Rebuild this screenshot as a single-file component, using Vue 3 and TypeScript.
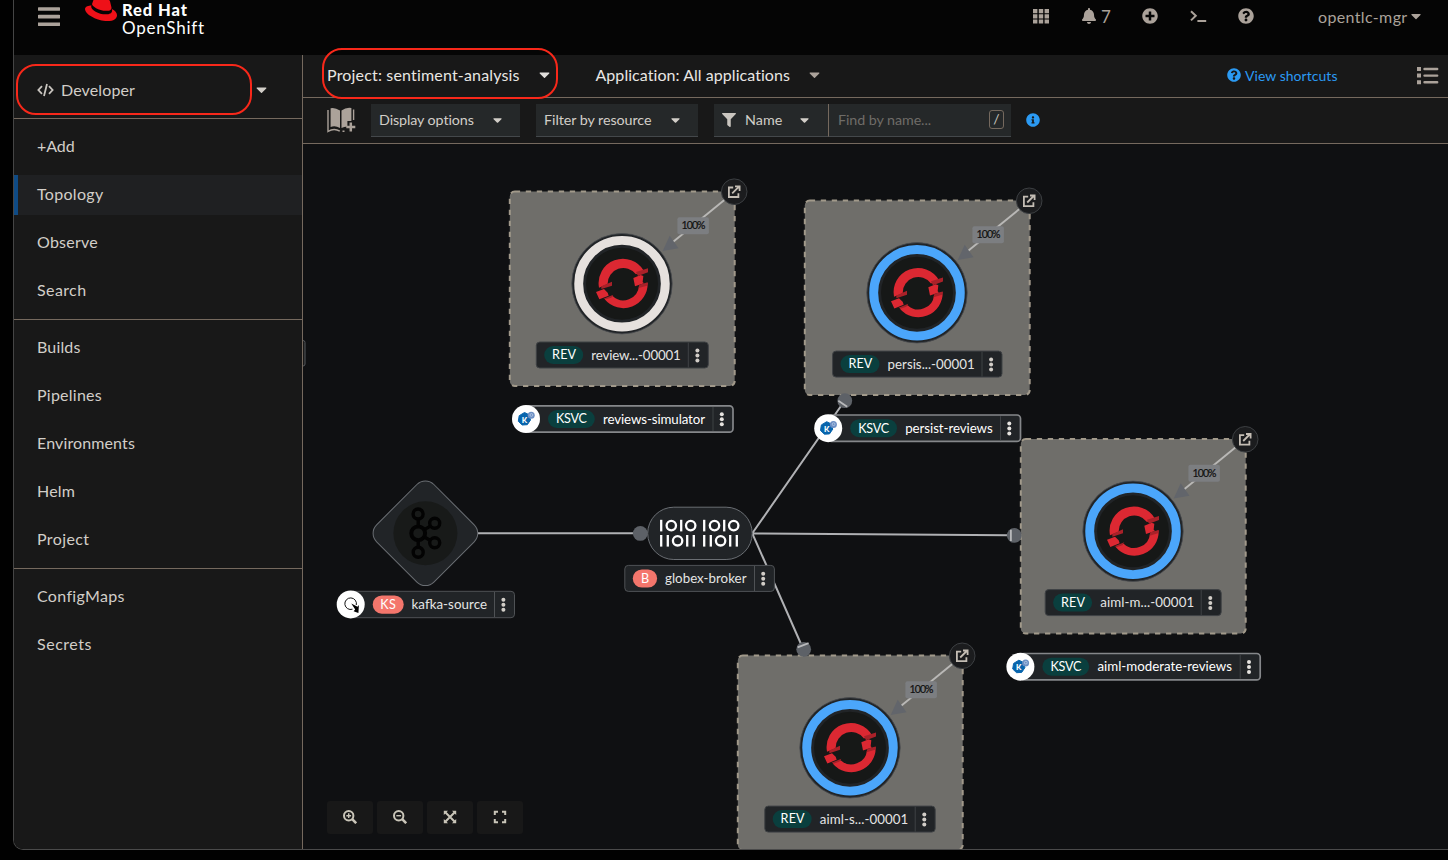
<script setup lang="ts">
import type { Directive } from 'vue'

// Spreads the letters of a label so that it fills the given width in pixels.
const vFit: Directive<HTMLElement, number> = {
  mounted(el, binding) {
    const natural = el.getBoundingClientRect().width
    const count = (el.textContent ?? '').trim().length
    if (count > 0) el.style.letterSpacing = `${(binding.value - natural) / count}px`
  },
}

interface NavItem { label: string; width: number; active?: boolean }
const sections: NavItem[][] = [
  [
    { label: '+Add', width: 37.5 },
    { label: 'Topology', width: 66.5, active: true },
    { label: 'Observe', width: 61 },
    { label: 'Search', width: 49.5 },
  ],
  [
    { label: 'Builds', width: 43.5 },
    { label: 'Pipelines', width: 65 },
    { label: 'Environments', width: 98 },
    { label: 'Helm', width: 38 },
    { label: 'Project', width: 52.5 },
  ],
  [
    { label: 'ConfigMaps', width: 87.5 },
    { label: 'Secrets', width: 55 },
  ],
]

interface Revision { x: number; y: number; ring: string; name: string; nameWidth: number; left: number; right: number }
const revisions: Revision[] = [
  { x: 622, y: 283.7, ring: '#e6e1de', name: 'review...-00001', nameWidth: 89.5, left: 536.3, right: 708.3 },
  { x: 917, y: 292.8, ring: '#4ba6fb', name: 'persis...-00001', nameWidth: 87, left: 832.6, right: 1002 },
  { x: 1133, y: 531.3, ring: '#4ba6fb', name: 'aiml-m...-00001', nameWidth: 94, left: 1045.2, right: 1221.2 },
  { x: 850, y: 747.8, ring: '#4ba6fb', name: 'aiml-s...-00001', nameWidth: 88.5, left: 764.8, right: 935.2 },
]

interface Service { x: number; y: number; right: number; name: string; nameWidth: number }
const services: Service[] = [
  { x: 526, y: 419, right: 733, name: 'reviews-simulator', nameWidth: 102 },
  { x: 828.2, y: 428.2, right: 1020.5, name: 'persist-reviews', nameWidth: 87.5 },
  { x: 1020.4, y: 666.7, right: 1260.2, name: 'aiml-moderate-reviews', nameWidth: 134.5 },
]

const bits = [
  { ones: [661.2, 681.2, 704.2, 724.2], zeros: [671.3, 690.7, 714.5, 733.7], y: 525.6 },
  { ones: [661.2, 667.8, 687.2, 693.8, 704.2, 710.8, 730.2, 736.8], zeros: [677.6, 720.6], y: 540.8 },
]

const caret = 'M31.3 192h257.3c17.8 0 26.7 21.5 14.1 34.1L174.1 354.8c-7.8 7.8-20.5 7.8-28.3 0L17.2 226.1C4.6 213.5 13.5 192 31.3 192z'
const question = 'M504 256c0 136.997-111.043 248-248 248S8 392.997 8 256C8 119.083 119.043 8 256 8s248 111.083 248 248zM262.655 90c-54.497 0-89.255 22.957-116.549 63.758-3.536 5.286-2.353 12.415 2.715 16.258l34.699 26.31c5.205 3.947 12.621 3.008 16.665-2.122 17.864-22.658 30.113-35.797 57.303-35.797 20.429 0 45.698 13.148 45.698 32.958 0 14.976-12.363 22.667-32.534 33.976C247.128 238.528 216 254.941 216 296v4c0 6.627 5.373 12 12 12h56c6.627 0 12-5.373 12-12v-1.333c0-28.462 83.186-29.647 83.186-106.667 0-58.002-60.165-102-116.531-102zM256 338c-25.365 0-46 20.635-46 46 0 25.364 20.635 46 46 46s46-20.636 46-46c0-25.365-20.635-46-46-46z'
</script>

<template>
  <div class="desktop">
    <div class="window">
      <header class="masthead">
        <svg class="burger" width="22" height="19" viewBox="0 0 22 19"><path d="M1 2h20M1 9.6h20M1 17.2h20" stroke="#aba29a" stroke-width="3.6" stroke-linecap="round" /></svg>
        <svg class="hat" width="32" height="28" viewBox="0 0 24 21">
          <path fill="#ee1018" d="M16.009 13.386c1.577 0 3.86-.326 3.86-2.202a1.765 1.765 0 0 0-.04-.431l-.94-4.08c-.216-.898-.406-1.305-1.982-2.093-1.223-.625-3.888-1.658-4.676-1.658-.733 0-.947.946-1.822.946-.842 0-1.467-.706-2.255-.706-.757 0-1.25.515-1.63 1.576 0 0-1.06 2.99-1.197 3.424a.81.81 0 0 0-.028.245c0 1.162 4.577 4.974 10.71 4.974m4.101-1.435c.218 1.032.218 1.14.218 1.277 0 1.765-1.984 2.745-4.593 2.745-5.895.004-11.06-3.451-11.06-5.734a2.326 2.326 0 0 1 .19-.925C2.746 9.415 0 9.794 0 12.217c0 3.969 9.405 8.861 16.851 8.861 5.71 0 7.149-2.582 7.149-4.62 0-1.605-1.387-3.425-3.887-4.512" />
        </svg>
        <div class="brand">
          <span><b v-fit="66">Red Hat</b></span>
          <span><i v-fit="82.5">OpenShift</i></span>
        </div>
        <nav class="tools">
          <svg class="t-grid" width="16" height="15" viewBox="0 0 16 15"><path d="M0 0h4.4v4.2H0zM5.8 0h4.4v4.2H5.8zM11.6 0H16v4.2h-4.4zM0 5.2h4.4v4.2H0zM5.8 5.2h4.4v4.2H5.8zM11.6 5.2H16v4.2h-4.4zM0 10.4h4.4v4.2H0zM5.8 10.4h4.4v4.2H5.8zM11.6 10.4H16v4.2h-4.4z" fill="#aba29a" /></svg>
          <svg class="t-bell" width="14" height="16" viewBox="0 0 448 512"><path fill="#aba29a" d="M224 512c35.32 0 63.97-28.65 63.97-64H160.03c0 35.35 28.65 64 63.97 64zm215.39-149.71c-19.32-20.76-55.47-51.99-55.47-154.29 0-77.7-54.48-139.9-127.94-155.16V32c0-17.67-14.32-32-31.98-32s-31.98 14.33-31.98 32v20.84C118.56 68.1 64.08 130.3 64.08 208c0 102.3-36.15 133.53-55.47 154.29-6 6.45-8.66 14.16-8.61 21.71.11 16.4 12.98 32 32.1 32h383.8c19.12 0 32-15.6 32.1-32 .05-7.55-2.61-15.27-8.61-21.71z" /></svg>
          <span class="t-count">7</span>
          <svg class="t-plus" width="16" height="16" viewBox="0 0 512 512"><path fill="#aba29a" d="M256 8C119 8 8 119 8 256s111 248 248 248 248-111 248-248S393 8 256 8zm144 276c0 6.6-5.4 12-12 12h-92v92c0 6.6-5.4 12-12 12h-56c-6.6 0-12-5.4-12-12v-92h-92c-6.6 0-12-5.4-12-12v-56c0-6.6 5.4-12 12-12h92v-92c0-6.6 5.4-12 12-12h56c6.6 0 12 5.4 12 12v92h92c6.6 0 12 5.4 12 12v56z" /></svg>
          <svg class="t-term" width="17" height="13" viewBox="0 0 17 13"><path d="M1 1.2l4.8 4.6L1 10.4M7.4 11h8.8" fill="none" stroke="#aba29a" stroke-width="2" /></svg>
          <svg class="t-help" width="16" height="16" viewBox="0 0 512 512"><path fill="#aba29a" :d="question" /></svg>
          <span class="t-user"><span v-fit="89.5">opentlc-mgr</span></span>
          <svg class="t-caret" width="10" height="16" viewBox="0 0 320 512"><path fill="#aba29a" :d="caret" /></svg>
        </nav>
      </header>

      <div class="body">
        <aside class="sidebar">
          <div class="perspective">
            <svg width="17" height="14" viewBox="0 0 17 14"><path d="M5 3.2L1.4 7 5 10.8M12 3.2L15.6 7 12 10.8M10 1L7 13" fill="none" stroke="#c9c5bf" stroke-width="1.8" /></svg>
            <span class="p-name"><span v-fit="74">Developer</span></span>
            <svg class="p-caret" width="11" height="17" viewBox="0 0 320 512"><path fill="#d2cec8" :d="caret" /></svg>
          </div>
          <ul v-for="(section, i) in sections" :key="i" class="section">
            <li v-for="item in section" :key="item.label" :class="{ active: item.active }">
              <span v-fit="item.width">{{ item.label }}</span>
            </li>
          </ul>
        </aside>

        <main class="main">
          <div class="context">
            <span class="c-project"><span v-fit="193">Project: sentiment-analysis</span></span>
            <svg class="c-caret" width="11" height="17" viewBox="0 0 320 512"><path fill="#e0dedb" :d="caret" /></svg>
            <span class="c-app"><span v-fit="195">Application: All applications</span></span>
            <svg class="c-caret2" width="11" height="17" viewBox="0 0 320 512"><path fill="#aba29a" :d="caret" /></svg>
            <a class="shortcuts">
              <svg width="14" height="14" viewBox="0 0 512 512"><path fill="#2b9af3" :d="question" /></svg>
              <span v-fit="92.5">View shortcuts</span>
            </a>
            <svg class="list" width="22" height="18" viewBox="0 0 22 18"><path d="M0 0h4v4H0zM0 6.6h4v4H0zM0 13.2h4v4H0z" fill="#aba29a" /><path d="M7.5 2h12.7M7.5 8.6h12.7M7.5 15.2h12.7" stroke="#aba29a" stroke-width="2.4" stroke-linecap="round" /></svg>
          </div>

          <div class="filters">
            <svg class="book" width="29" height="27" viewBox="0 0 29 27">
              <path d="M3.6 1.2Q8 .2 13 3.5V21Q8 18 3.6 20zM14.5 3.5Q19 .2 24.4 1V14h-4v5.4Q17 19.5 14.5 21z" fill="#aba29a" />
              <path d="M1 3v21.5Q7 20.5 12.8 24.2M15.5 24.3h2M26.6 2.6V13" fill="none" stroke="#aba29a" stroke-width="1.4" />
              <path d="M23.8 15.5v9M19.3 20h9" stroke="#aba29a" stroke-width="2.5" />
            </svg>
            <div class="select display"><span v-fit="95">Display options</span><svg width="9" height="14" viewBox="0 0 320 512"><path fill="#d2cec8" :d="caret" /></svg></div>
            <div class="select resource"><span v-fit="107.5">Filter by resource</span><svg width="9" height="14" viewBox="0 0 320 512"><path fill="#d2cec8" :d="caret" /></svg></div>
            <div class="select name">
              <svg width="14" height="14" viewBox="0 0 512 512"><path fill="#c9c5bf" d="M487.976 0H24.028C2.71 0-8.047 25.866 7.058 40.971L192 225.941V432c0 7.831 3.821 15.17 10.237 19.662l80 55.98C298.02 518.69 320 507.493 320 487.98V225.941l184.947-184.97C520.021 25.896 509.338 0 487.976 0z" /></svg>
              <span class="n-label"><span v-fit="37.5">Name</span></span>
              <svg class="n-caret" width="9" height="14" viewBox="0 0 320 512"><path fill="#d2cec8" :d="caret" /></svg>
            </div>
            <div class="find"><span v-fit="93">Find by name...</span><kbd>/</kbd></div>
            <svg class="info" width="14" height="14" viewBox="0 0 512 512"><path fill="#2b9af3" d="M256 8C119.043 8 8 119.083 8 256c0 136.997 111.043 248 248 248s248-111.003 248-248C504 119.083 392.957 8 256 8zm0 110c23.196 0 42 18.804 42 42s-18.804 42-42 42-42-18.804-42-42 18.804-42 42-42zm56 254c0 6.627-5.373 12-12 12h-88c-6.627 0-12-5.373-12-12v-24c0-6.627 5.373-12 12-12h12v-64h-12c-6.627 0-12-5.373-12-12v-24c0-6.627 5.373-12 12-12h64c6.627 0 12 5.373 12 12v100h12c6.627 0 12 5.373 12 12v24z" /></svg>
          </div>

          <section class="canvas">
            <svg class="graph" width="1145" height="705" viewBox="303 144 1145 705">
              <path d="M303 340.5q2 0 2 2v21.5q0 2-2 2" fill="#181818" stroke="#55585c" />

              <!-- revision groups -->
              <rect v-for="r in revisions" :key="'g' + r.name" :x="r.x - 112.2" :y="r.y - 92.2" width="224.9" height="194.4" rx="5" fill="#6f6e6a" stroke="#a1998a" stroke-width="2" stroke-dasharray="5.3 5.7" />

              <!-- connectors -->
              <g stroke="#b0b1b4" stroke-width="2" fill="none">
                <path d="M478 533.3H636M752.3 533.3L841 406M752.3 533.3L1008 535.3M752.3 533.3L801 644" />
              </g>
              <g fill="#5d6167">
                <circle cx="640.3" cy="533.4" r="7.4" />
                <circle cx="844.8" cy="400.7" r="7.4" />
                <circle cx="1014.3" cy="535.4" r="7.4" />
                <circle cx="803.7" cy="649.3" r="7.4" />
              </g>
              <path d="M838.3 400.8L847.2 406.8M1010.9 529.8V541M797.6 647.3L808.6 643.2" stroke="#b8b9bb" stroke-width="1.8" />

              <!-- revision nodes -->
              <g v-for="r in revisions" :key="r.name">
                <g :transform="`translate(${r.x} ${r.y})`">
                  <path d="M110 -90L50 -41" stroke="#b9b8b6" stroke-width="1.9" />
                  <path d="M40.7 -32.7L47.7 -48L56.5 -35.5Z" fill="#62656b" />
                  <rect x="55.4" y="-66.5" width="31.5" height="17" rx="2" fill="#7c7e81" />
                  <text x="59.5" y="-54.6" font-size="10.5" textLength="24" fill="#101010" stroke="#101010" stroke-width=".2">100%</text>
                  <circle cx="112.2" cy="-92" r="12.8" fill="#1b1c1e" stroke="#3c3f42" />
                  <path d="M111.2 -96.2H106.9V-86.7H116.4V-90.5M110.2 -90.3L117.2 -97.3M113 -97.3H117.6V-92.7" fill="none" stroke="#c4bdb4" stroke-width="1.8" />
                  <circle r="50.2" fill="#212427" stroke="#4a4d50" stroke-width=".8" />
                  <circle r="43.3" fill="#212427" :stroke="r.ring" stroke-width="8.9" />
                  <circle r="36" fill="#161817" />
                  <g transform="scale(.3333) translate(-366 -341)">
                    <path fill="#dc2832" d="M297 353A73 73 0 0 1 432 303L408 313A47 47 0 0 0 323 342ZM443 338A73 73 0 0 1 314 388L338 378A47 47 0 0 0 417 348ZM400 324L422 315L430 318L428 336L432 340L405 349ZM288 366L312 357L323 368L326 377L298 388Z" />
                    <path fill="#a92129" d="M408 306L444 295V307L414 318ZM304 349L336 335V347L304 357ZM418 344L443 337L441 347L416 354ZM310 386L340 374L334 383L318 388Z" />
                  </g>
                </g>
                <rect :x="r.left" :y="r.y + 58.3" :width="r.right - r.left" height="26" rx="3.5" fill="#212427" stroke="#3f4245" />
                <rect :x="r.left + 7.9" :y="r.y + 62.3" width="39" height="18" rx="9" fill="#0a3f3e" />
                <text :x="r.left + 15.8" :y="r.y + 75.3" font-size="12.6" textLength="24" fill="#fff">REV</text>
                <text :x="r.left + 55" :y="r.y + 76" font-size="13.3" :textLength="r.nameWidth" fill="#e4e4e4">{{ r.name }}</text>
                <path :d="`M${r.right - 20} ${r.y + 58.8}v25`" stroke="#3f4245" />
                <g fill="#d2cec8"><circle v-for="k in [-5, 0, 5]" :key="k" :cx="r.right - 10.9" :cy="r.y + 71.7 + k" r="2" /></g>
              </g>

              <!-- knative service labels -->
              <g v-for="s in services" :key="s.name">
                <rect :x="s.x" :y="s.y - 13.2" :width="s.right - s.x" height="26.4" rx="3.5" fill="#212427" stroke="#85878a" stroke-width="1.7" />
                <circle :cx="s.x" :cy="s.y" r="14" fill="#fff" />
                <g :transform="`translate(${s.x} ${s.y})`">
                  <path d="M-1.5 -6.5L3 -4.3L4.5 1L1.3 5.7L-3.8 6L-7.7 2.3L-6.8 -3.3Z" fill="#0865ad" stroke="#0865ad" stroke-linejoin="round" />
                  <circle cx="5.2" cy="-3.8" r="3.5" fill="#6d8fc4" /><circle cx="5.4" cy="-4" r="1.4" fill="none" stroke="#b9cbe6" stroke-width=".8" />
                  <text x="-4.3" y="3.5" font-size="7.8" font-weight="900" fill="#fff">K</text>
                </g>
                <rect :x="s.x + 22" :y="s.y - 9" width="46.8" height="18" rx="9" fill="#0a3f3e" />
                <text :x="s.x + 30" :y="s.y + 4.4" font-size="12.6" textLength="31" fill="#fff">KSVC</text>
                <text :x="s.x + 77" :y="s.y + 4.7" font-size="13.3" :textLength="s.nameWidth" fill="#fff">{{ s.name }}</text>
                <path :d="`M${s.right - 20} ${s.y - 12}v24`" stroke="#3f4245" />
                <g fill="#e6e3df"><circle v-for="k in [-5, 0, 5]" :key="k" :cx="s.right - 11.2" :cy="s.y + .3 + k" r="2" /></g>
              </g>

              <!-- kafka source -->
              <g transform="translate(425.4 533.3)">
                <rect x="-40.5" y="-40.5" width="81" height="81" rx="12" transform="rotate(45)" fill="#212427" stroke="#6a6e73" />
                <circle r="32" fill="#181a19" />
                <g fill="none" stroke="#030303" stroke-width="3.4">
                  <circle cx="-7.3" cy="-19.3" r="5" /><circle cx="-7.2" cy="19" r="5" />
                  <circle cx="9.3" cy="-10" r="5" /><circle cx="9.3" cy="9.5" r="5" />
                  <circle cx="-7.2" cy="0" r="6.9" stroke-width="4" />
                  <path d="M-7.2 -14V-7M-7.2 7V14M-1 -3.7L5 -7.2M-1 3.7L5 7.2" />
                </g>
              </g>
              <g>
                <rect x="350" y="591.3" width="164.5" height="26.4" rx="3.5" fill="#212427" stroke="#4f5255" />
                <circle cx="350.7" cy="604.4" r="14" fill="#fff" />
                <path d="M352.5 609.2A5.8 5.8 0 1 1 356.3 605" fill="none" stroke="#111" />
                <path d="M351.3 603.5L357.5 606.8L358.9 604.9L358.4 613L353.6 611.2L355.2 609.5Z" fill="#000" />
                <rect x="372.7" y="595.4" width="31" height="18.3" rx="9.15" fill="#f4766c" />
                <text x="380.3" y="608.9" font-size="12.6" textLength="15.5" fill="#fff">KS</text>
                <text x="411.5" y="609.2" font-size="13.3" textLength="75.5" fill="#e4e4e4">kafka-source</text>
                <path d="M494.5 592v25" stroke="#4f5255" />
                <g fill="#d2cec8"><circle v-for="k in [-5, 0, 5]" :key="k" cx="503.4" :cy="604.7 + k" r="2" /></g>
              </g>

              <!-- broker -->
              <rect x="647.7" y="507.2" width="104.5" height="52.3" rx="26.1" fill="#212427" stroke="#6a6e73" />
              <g v-for="(row, i) in bits" :key="i" stroke="#fff" stroke-width="2.3" fill="none">
                <path v-for="x in row.ones" :key="x" :d="`M${x} ${row.y - 5.8}v11.6`" />
                <circle v-for="x in row.zeros" :key="x" :cx="x" :cy="row.y" r="4.7" />
              </g>
              <g>
                <rect x="624.8" y="565.4" width="149.6" height="26" rx="3.5" fill="#212427" stroke="#4f5255" />
                <rect x="632.8" y="569.4" width="24.3" height="18.2" rx="9.1" fill="#f4766c" />
                <text x="641" y="583" font-size="12.6" textLength="8" fill="#fff">B</text>
                <text x="665" y="583.2" font-size="13.3" textLength="81.5" fill="#e4e4e4">globex-broker</text>
                <path d="M754.5 566v25" stroke="#4f5255" />
                <g fill="#d2cec8"><circle v-for="k in [-5, 0, 5]" :key="k" cx="763.2" :cy="578.7 + k" r="2" /></g>
              </g>
            </svg>

            <div class="zoombar">
              <button><svg width="14" height="14" viewBox="0 0 14 14"><circle cx="5.7" cy="5.7" r="4.7" /><path d="M9.2 9.2l4 4" stroke-width="2.6" /><path d="M3.3 5.7h4.8M5.7 3.3v4.8" stroke-width="1.4" /></svg></button>
              <button><svg width="14" height="14" viewBox="0 0 14 14"><circle cx="5.7" cy="5.7" r="4.7" /><path d="M9.2 9.2l4 4" stroke-width="2.6" /><path d="M3.3 5.7h4.8" stroke-width="1.4" /></svg></button>
              <button><svg width="14" height="14" viewBox="0 0 14 14"><path d="M2 2l10 10M12 2L2 12" /><path d="M.8 5V.8H5zM9 .8h4.2V5zM13.2 9v4.2H9zM5 13.2H.8V9z" class="solid" /></svg></button>
              <button><svg width="14" height="14" viewBox="0 0 14 14"><path d="M1.8 5V1.8H5M9 1.8h3.2V5M12.2 9v3.2H9M5 12.2H1.8V9" /></svg></button>
            </div>
          </section>
        </main>
      </div>
    </div>
    <div class="mark mark-perspective"></div>
    <div class="mark mark-project"></div>
  </div>
</template>

<style>
html, body { margin: 0; background: #010101; overflow: hidden; }
</style>

<style scoped>
.desktop {
  position: relative;
  box-sizing: border-box;
  width: 1448px;
  height: 860px;
  padding-left: 13px;
  background: #010101;
  font-family: Lato, "Noto Sans", sans-serif;
  font-size: 16px;
  color: #d2cec8;
  overflow: hidden;
  white-space: nowrap;
}
svg { display: block; flex: none; }
.window {
  box-sizing: border-box;
  height: 850px;
  display: flex;
  flex-direction: column;
  border-left: 1px solid #454545;
  border-bottom: 1px solid #4a4a4a;
  border-bottom-left-radius: 10px;
  overflow: hidden;
}
.masthead { height: 55px; flex: none; display: flex; align-items: flex-start; background: #050505; overflow: hidden; }
.burger { margin: 7px 0 0 24px; }
.hat { margin: -7px 0 0 25px; }
.brand { padding-top: .5px; margin-left: 5px; width: 100px; display: flex; flex-direction: column; color: #fff; font-size: 17px; line-height: 18.5px; }
.brand b { font-weight: 900; font-size: 16.5px; }
.brand i { font-style: normal; }
.tools { margin-left: auto; width: 415px; height: 32px; display: flex; align-items: center; color: #aba29a; }
.t-bell { margin-left: 33px; }
.t-count { margin-left: 5px; width: 9px; font-size: 17px; }
.t-plus { margin-left: 32px; }
.t-term { margin-left: 32px; }
.t-help { margin-left: 31px; }
.t-user { margin-left: 64px; width: 89px; }
.t-caret { margin-left: 4px; }

.body { flex: 1; min-height: 0; display: flex; }
.sidebar { width: 288px; flex: none; background: #181818; border-right: 1px solid #75695e; }
.perspective { box-sizing: border-box; height: 64px; display: flex; align-items: center; padding: 8px 0 2px 23px; border-bottom: 1px solid #75695e; }
.p-name { margin-left: 7px; width: 195px; }
.section { list-style: none; margin: 0; padding: 8px 0; display: flex; flex-direction: column; gap: 8px; }
.section:not(:last-child) { border-bottom: 1px solid #75695e; }
.section li { height: 40px; box-sizing: border-box; padding: 0 0 3px 23px; display: flex; align-items: center; }
.section li.active { background: #1f2022; border-left: 4px solid #0f4b85; padding-left: 19px; }

.main { flex: 1; min-width: 0; display: flex; flex-direction: column; background: #0f1012; }
.context { height: 43px; flex: none; box-sizing: border-box; padding-bottom: 3px; border-bottom: 1px solid #75695e; background: #181818; display: flex; align-items: center; color: #e8e6e3; }
.c-project { margin-left: 24px; width: 193px; }
.c-caret { margin-left: 18.5px; }
.c-app { margin-left: 46px; width: 195px; }
.c-caret2 { margin-left: 18px; }
.shortcuts { margin: 1px 0 0 407.5px; width: 140px; display: flex; align-items: center; gap: 4px; color: #2b9af3; font-size: 14px; }
.list { margin: 2px 0 0 50px; }
.filters { height: 46px; flex: none; box-sizing: border-box; border-bottom: 1px solid #75695e; background: #181818; display: flex; align-items: center; font-size: 14.3px; }
.filters span { padding-bottom: 1px; }
.book { margin-left: 24px; }
.select { box-sizing: border-box; height: 33px; display: flex; align-items: center; justify-content: space-between; background: #252829; border-bottom: 1px solid #44484b; padding: 0 18px 1px 8px; }
.display { width: 149px; margin-left: 15px; }
.resource { width: 162px; margin-left: 16px; }
.name { width: 114px; margin-left: 16px; justify-content: flex-start; padding-right: 0; }
.n-label { margin-left: 9px; width: 38px; }
.n-caret { margin-left: 17px; }
.find { box-sizing: border-box; width: 183px; height: 33px; display: flex; align-items: center; justify-content: space-between; background: #252829; border-left: 1px solid #75695e; border-bottom: 1px solid #44484b; padding: 0 7px 1px 9px; color: #6f6c68; }
kbd { box-sizing: border-box; width: 15px; height: 19px; border: 1px solid #75695e; border-radius: 3px; font: 14px/16px Lato, sans-serif; text-align: center; color: #c9c5bf; }
.info { margin: 0 0 1px 15px; }

.canvas { flex: 1; min-height: 0; position: relative; overflow: hidden; }
.graph text { font-family: Lato, "Noto Sans", sans-serif; }
.zoombar { position: absolute; left: 24px; bottom: 15px; display: flex; gap: 4px; }
.zoombar button { width: 46px; height: 33px; padding: 0 0 1px; border: 0; border-radius: 3px; background: #181818; display: flex; align-items: center; justify-content: center; }
.zoombar svg { fill: none; stroke: #c9c5b8; stroke-width: 2; }
.zoombar .solid { fill: #c9c5b8; stroke: none; }

.mark { position: absolute; box-sizing: border-box; border: 2px solid #f8281a; }
.mark-perspective { left: 16px; top: 64px; width: 236px; height: 51px; border-radius: 20px; }
.mark-project { left: 322px; top: 48px; width: 236px; height: 51px; border-radius: 20px; }
</style>
